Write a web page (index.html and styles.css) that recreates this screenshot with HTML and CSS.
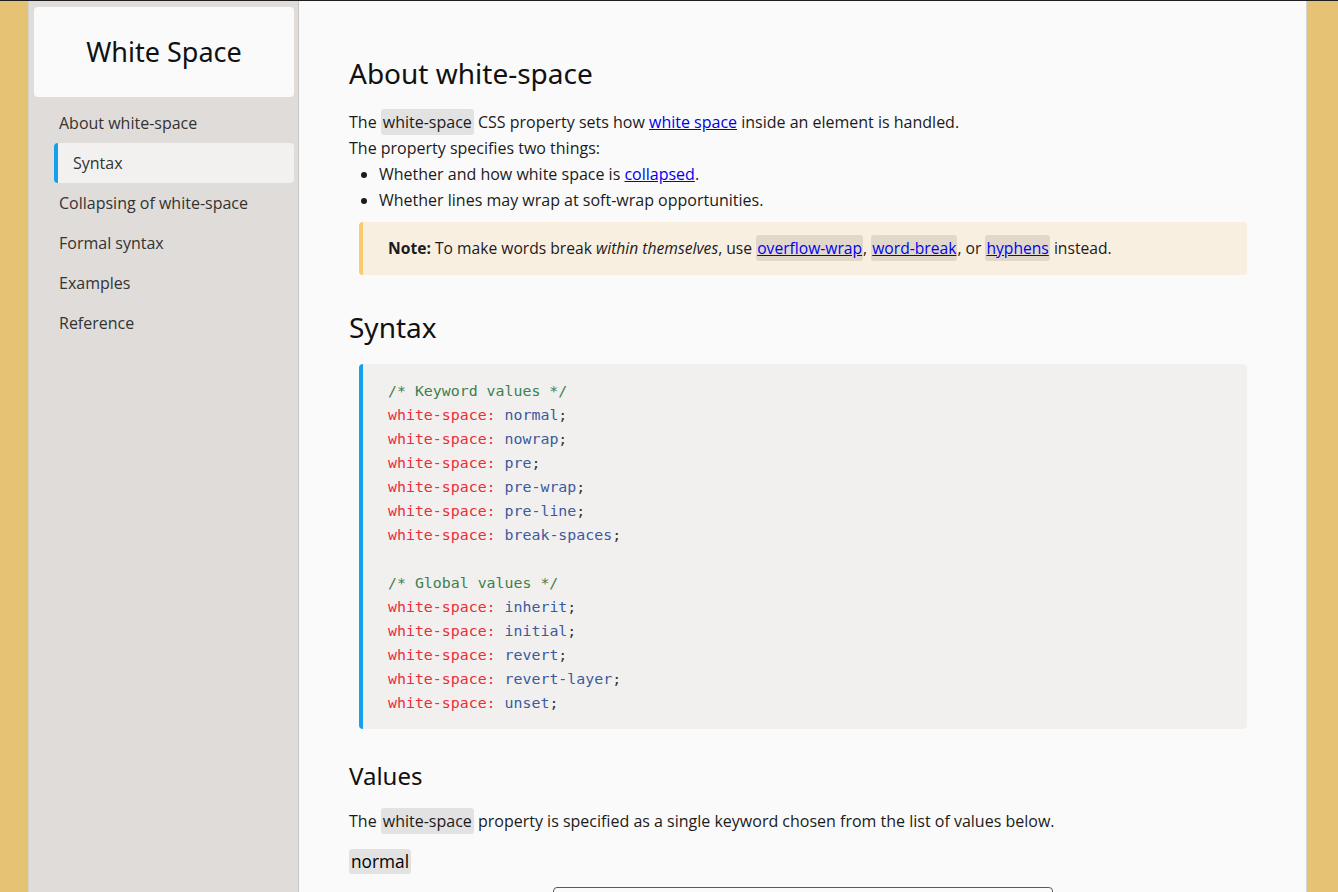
FILE: index.html
```html
<!DOCTYPE html>
<html lang="en">
<head>
<meta charset="utf-8">
<title>White Space</title>
<link rel="stylesheet" href="styles.css">
</head>
<body>
<div class="page">
  <aside class="sidebar">
    <div class="brand">White Space</div>
    <nav class="nav">
      <a class="nav-item" href="#about">About white-space</a>
      <a class="nav-item active" href="#syntax">Syntax</a>
      <a class="nav-item" href="#collapsing">Collapsing of white-space</a>
      <a class="nav-item" href="#formal">Formal syntax</a>
      <a class="nav-item" href="#examples">Examples</a>
      <a class="nav-item" href="#reference">Reference</a>
    </nav>
  </aside>
  <main class="main">
    <h1 class="h-big" id="about">About white-space</h1>
    <p class="text">The <code class="ic">white-space</code> CSS property sets how <a href="#">white space</a> inside an element is handled.<br>The property specifies two things:</p>
    <ul class="list">
      <li>Whether and how white space is <a href="#">collapsed</a>.</li>
      <li>Whether lines may wrap at soft-wrap opportunities.</li>
    </ul>
    <div class="note"><b>Note:</b> To make words break <i>within themselves</i>, use <code class="ic"><a href="#">overflow-wrap</a></code>, <code class="ic"><a href="#">word-break</a></code>, or <code class="ic"><a href="#">hyphens</a></code> instead.</div>
    <h2 class="h-big h-syntax" id="syntax">Syntax</h2>
    <pre class="code"><span class="c">/* Keyword values */</span>
<span class="p">white-space:</span> <span class="v">normal</span>;
<span class="p">white-space:</span> <span class="v">nowrap</span>;
<span class="p">white-space:</span> <span class="v">pre</span>;
<span class="p">white-space:</span> <span class="v">pre-wrap</span>;
<span class="p">white-space:</span> <span class="v">pre-line</span>;
<span class="p">white-space:</span> <span class="v">break-spaces</span>;

<span class="c">/* Global values */</span>
<span class="p">white-space:</span> <span class="v">inherit</span>;
<span class="p">white-space:</span> <span class="v">initial</span>;
<span class="p">white-space:</span> <span class="v">revert</span>;
<span class="p">white-space:</span> <span class="v">revert-layer</span>;
<span class="p">white-space:</span> <span class="v">unset</span>;</pre>
    <h3 class="h-mid">Values</h3>
    <p class="text">The <code class="ic">white-space</code> property is specified as a single keyword chosen from the list of values below.</p>
    <div class="term"><span class="term-name">normal</span></div>
    <div class="frame"></div>
  </main>
</div>
</body>
</html>
```
FILE: styles.css
```css
html, body {
  margin: 0;
  padding: 0;
}
body {
  background: #e6c274;
  border-top: 1px solid #1e1e1e;
  height: 891px;
  overflow: hidden;
  font-family: "Open Sans", "Noto Sans", sans-serif;
  color: #1b1b1b;
}
.page {
  display: flex;
  margin-left: 28px;
  width: 1279px;
  height: 100%;
}
.sidebar {
  width: 260px;
  flex: none;
  background: #dfdcd9;
  border-left: 1px solid #d4d1cd;
  border-right: 1px solid #c7c4c1;
  padding: 6px 4px 0 5px;
}
.brand {
  height: 89px;
  padding-bottom: 1px;
  background: #fafafa;
  border-radius: 4px;
  display: flex;
  align-items: center;
  justify-content: center;
  font-family: "Noto Sans", sans-serif;
  font-size: 27px;
  color: #111;
}
.nav {
  display: flex;
  flex-direction: column;
  margin: 6px 0 0 20px;
}
.nav-item {
  height: 40px;
  display: flex;
  align-items: center;
  padding-left: 5px;
  color: #333;
  text-decoration: none;
  font-size: 16px;
}
.nav-item.active {
  background: #f2f1f0;
  border-left: 4px solid #14a0ea;
  border-radius: 4px;
  padding-left: 15px;
}
.main {
  flex: 1;
  background: #fafafa;
  border-right: 1px solid #d6d6d6;
  padding: 55px 59px 0 50px;
  min-width: 0;
  overflow: hidden;
}
.h-big {
  font-family: "Noto Sans", sans-serif;
  font-weight: 400;
  font-size: 28px;
  line-height: 34px;
  margin: 0 0 19px;
  color: #111;
}
.h-syntax {
  margin-top: 35px;
}
.h-mid {
  font-family: "Noto Sans", sans-serif;
  font-weight: 400;
  font-size: 24px;
  line-height: 29px;
  margin: 32px 0 18px;
  color: #111;
}
.text {
  font-size: 16px;
  line-height: 26px;
  margin: 0;
}
.list {
  margin: 0;
  padding-left: 30px;
  font-size: 16px;
  line-height: 26px;
}
a {
  color: #0000ee;
}
.ic {
  font-family: "Open Sans", "Noto Sans", sans-serif;
  background: rgba(0, 0, 0, 0.095);
  border-radius: 3px;
  padding: 2px 2px;
  font-size: inherit;
}
.note {
  margin: 9px 0 0 10px;
  background: #f9efe1;
  border-left: 4px solid #f9cb6d;
  border-radius: 4px;
  padding: 14px 25px;
  font-size: 15.65px;
  line-height: 25px;
}
.note .ic {
  padding: 2px 1px;
}
.code {
  margin: 20px 0 0 10px;
  background: #f1f0ee;
  border-left: 4px solid #14a0ea;
  border-radius: 4px;
  padding: 15px 25px 14px;
  font-family: "DejaVu Sans Mono", monospace;
  font-size: 14.9px;
  line-height: 24px;
  color: #333;
}
.code .c { color: #3d7f4f; }
.code .p { color: #ec2d3b; }
.code .v { color: #3c5a9e; }
.term {
  margin-top: 15px;
}
.term-name {
  display: inline-block;
  background: rgba(0, 0, 0, 0.095);
  border-radius: 3px;
  padding: 0 2px;
  font-size: 17.3px;
  line-height: 25px;
  font-weight: 400;
  color: #000;
}
.frame {
  width: 498px;
  height: 40px;
  margin: 13px auto 0;
  position: relative;
  left: 5px;
  border: 1px solid #5a5a5a;
  border-radius: 4px;
}
```
